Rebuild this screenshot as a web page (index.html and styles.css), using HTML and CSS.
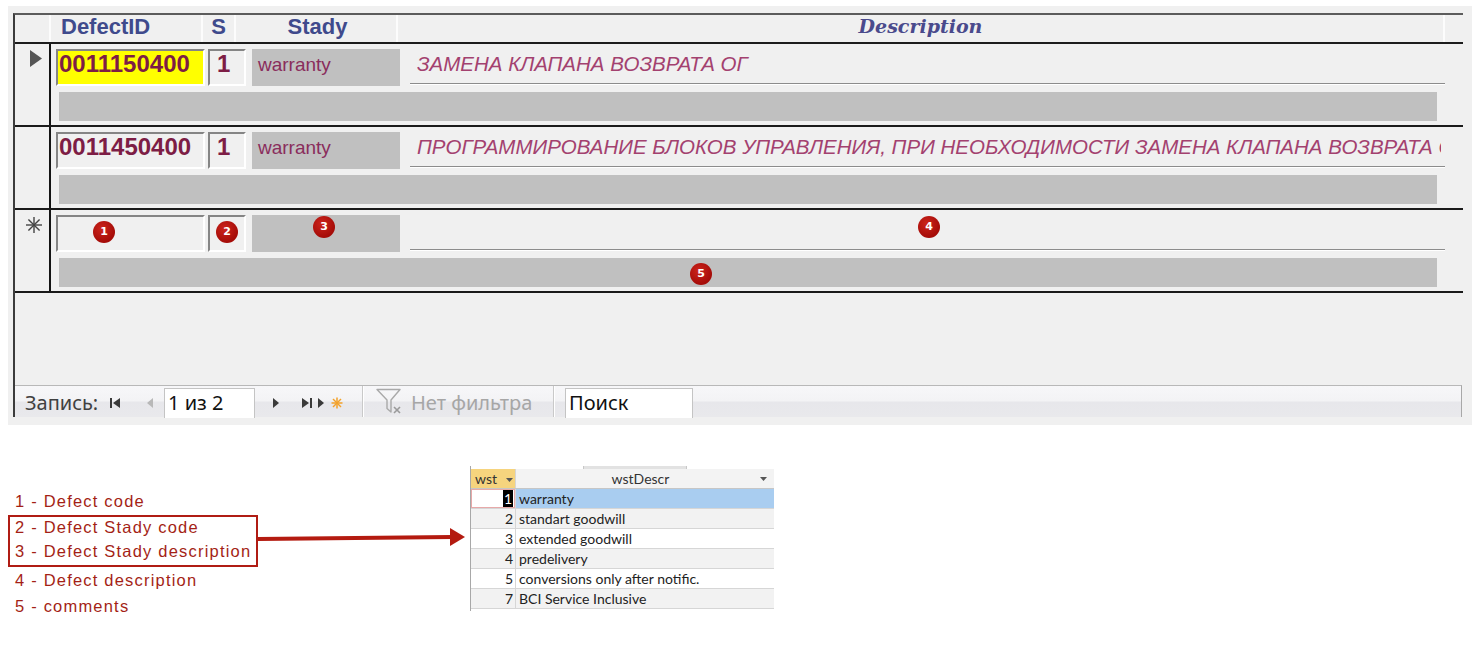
FILE: index.html
```html
<!DOCTYPE html>
<html lang="ru">
<head>
<meta charset="utf-8">
<title>Defects form</title>
<link rel="stylesheet" href="styles.css">
</head>
<body>
<div class="panel">
  <div class="form">
    <div class="hdr">
      <div class="hc hsel"></div>
      <div class="hc h-id">DefectID</div>
      <div class="hc h-s">S</div>
      <div class="hc h-st">Stady</div>
      <div class="hc h-desc">Description</div>
      <div class="hc h-end"></div>
    </div>

    <div class="rec">
      <div class="sel"><svg class="tri" width="12" height="17" viewBox="0 0 12 17"><polygon points="0,0 12,8.5 0,17" fill="#555"/></svg></div>
      <div class="rbody">
        <div class="fields">
          <div class="fld f-id active">0011150400</div>
          <div class="fld f-s">1</div>
          <div class="f-st">warranty</div>
          <div class="f-desc"><span class="dtxt">ЗАМЕНА КЛАПАНА ВОЗВРАТА ОГ</span></div>
        </div>
        <div class="cmt"></div>
      </div>
    </div>

    <div class="rec">
      <div class="sel"></div>
      <div class="rbody">
        <div class="fields">
          <div class="fld f-id">0011450400</div>
          <div class="fld f-s">1</div>
          <div class="f-st">warranty</div>
          <div class="f-desc"><span class="dtxt">ПРОГРАММИРОВАНИЕ БЛОКОВ УПРАВЛЕНИЯ, ПРИ НЕОБХОДИМОСТИ ЗАМЕНА КЛАПАНА ВОЗВРАТА ОГ</span></div>
        </div>
        <div class="cmt"></div>
      </div>
    </div>

    <div class="rec">
      <div class="sel"><svg class="star" width="16" height="16" viewBox="0 0 16 16"><g stroke="#444" stroke-width="1.4"><line x1="8" y1="0" x2="8" y2="16"/><line x1="0" y1="8" x2="16" y2="8"/><line x1="2.4" y1="2.4" x2="13.6" y2="13.6"/><line x1="13.6" y1="2.4" x2="2.4" y2="13.6"/></g></svg></div>
      <div class="rbody">
        <div class="fields">
          <div class="fld f-id"><span class="badge b1">1</span></div>
          <div class="fld f-s"><span class="badge b2">2</span></div>
          <div class="f-st"><span class="badge b3">3</span></div>
          <div class="f-desc"><span class="badge b4">4</span></div>
        </div>
        <div class="cmt"><span class="badge b5">5</span></div>
      </div>
    </div>

    <div class="empty"></div>

    <div class="nav">
      <span class="nlbl">Запись:</span>
      <svg class="ic i-first" width="10" height="10" viewBox="0 0 10 10"><rect x="0" y="0" width="2" height="10" fill="#3a3a3a"/><polygon points="10,0 3,5 10,10" fill="#3a3a3a"/></svg>
      <svg class="ic i-prev" width="6" height="10" viewBox="0 0 6 10"><polygon points="6,0 0,5 6,10" fill="#b8b8b8"/></svg>
      <span class="nbox nb1">1 из 2</span>
      <svg class="ic i-next" width="6" height="10" viewBox="0 0 6 10"><polygon points="0,0 6,5 0,10" fill="#3a3a3a"/></svg>
      <svg class="ic i-last" width="10" height="10" viewBox="0 0 10 10"><polygon points="0,0 7,5 0,10" fill="#3a3a3a"/><rect x="8" y="0" width="2" height="10" fill="#3a3a3a"/></svg>
      <svg class="ic i-new" width="26" height="12" viewBox="0 0 26 12"><polygon points="0,1 6,6 0,11" fill="#3a3a3a"/><g stroke="#f3a22a" stroke-width="1.5"><line x1="19" y1="0.5" x2="19" y2="11.5"/><line x1="13.5" y1="6" x2="24.5" y2="6"/><line x1="15" y1="2" x2="23" y2="10"/><line x1="23" y1="2" x2="15" y2="10"/></g></svg>
      <span class="nsep"></span>
      <svg class="ic i-filter" width="27" height="27" viewBox="0 0 27 27"><path d="M1 1.5 H24 L15 12 V24 L11 20.5 V12 Z" fill="none" stroke="#a9a9a9" stroke-width="1.4" stroke-linejoin="round"/><g stroke="#9a9a9a" stroke-width="1.6"><line x1="18" y1="19" x2="24" y2="25"/><line x1="24" y1="19" x2="18" y2="25"/></g></svg>
      <span class="nflt">Нет фильтра</span>
      <span class="nsep"></span>
      <span class="nbox nb2">Поиск</span>
    </div>
  </div>
</div>

<div class="lower">
  <div class="legend">
    <div class="li">1 - Defect code</div>
    <div class="lbox">
      <div class="li">2 - Defect Stady code</div>
      <div class="li">3 - Defect Stady description</div>
    </div>
    <div class="li">4 - Defect description</div>
    <div class="li">5 - comments</div>
  </div>
  <svg class="arrow" width="210" height="22" viewBox="0 0 210 22"><polygon points="0,11 194,9 194,13 0,15" fill="#b41b10"/><polygon points="192,2 207,11 192,20" fill="#b41b10"/></svg>
  <div class="tbl">
    <div class="tstrip"></div>
    <div class="trow thead">
      <div class="tc c1 hy">wst <svg class="dd" width="7" height="4" viewBox="0 0 7 4"><polygon points="0,0 7,0 3.5,4" fill="#555"/></svg></div>
      <div class="tc c2 hg"><span class="htx">wstDescr</span><svg class="dd dd2" width="7" height="4" viewBox="0 0 7 4"><polygon points="0,0 7,0 3.5,4" fill="#555"/></svg></div>
    </div>
    <div class="trow">
      <div class="tc c1 act"><span class="curs">1</span></div>
      <div class="tc c2 selb">warranty</div>
    </div>
    <div class="trow alt">
      <div class="tc c1">2</div>
      <div class="tc c2">standart goodwill</div>
    </div>
    <div class="trow">
      <div class="tc c1">3</div>
      <div class="tc c2">extended goodwill</div>
    </div>
    <div class="trow alt">
      <div class="tc c1">4</div>
      <div class="tc c2">predelivery</div>
    </div>
    <div class="trow">
      <div class="tc c1">5</div>
      <div class="tc c2">conversions only after notific.</div>
    </div>
    <div class="trow alt">
      <div class="tc c1">7</div>
      <div class="tc c2">BCI Service Inclusive</div>
    </div>
  </div>
</div>
</body>
</html>
```

FILE: styles.css
```css
* { box-sizing: border-box; }

body {
  margin: 0;
  background: #ffffff;
  font-family: "Liberation Sans", Arial, sans-serif;
}

/* ---------- Access form panel ---------- */
.panel {
  margin: 6px 0 0 8px;
  width: 1464px;
  height: 419px;
  background: #f0f0f0;
  padding: 7px 0 0 5px;
}

.form {
  width: 1450px;
  height: 404px;
  border-left: 2px solid #3c3c3c;
  border-top: 2px solid #5c5c5c;
  display: flex;
  flex-direction: column;
}

.hdr {
  display: flex;
  height: 29px;
  border-bottom: 2px solid #1c1c1c;
  background: #f0f0f0;
}

.hc {
  height: 27px;
  border-right: 2px solid #fcfcfc;
  font-weight: bold;
  font-size: 22px;
  line-height: 23px;
  color: #3f4a8c;
  white-space: nowrap;
}

.hsel { width: 36px; }
.h-id { width: 152px; padding-left: 10px; }
.h-s { width: 33px; text-align: center; }
.h-st { width: 162px; text-align: center; padding-left: 3px; }
.h-desc {
  width: 1047px;
  text-align: center;
  font-family: "DejaVu Serif", serif;
  font-style: italic;
  font-size: 19px;
  color: #4a4a8c;
}
.h-end { flex: 1; border-right: none; }

.rec {
  display: flex;
  height: 83px;
  border-bottom: 2px solid #1a1a1a;
}

.sel {
  width: 36px;
  border-right: 2px solid #141414;
}

.tri { display: block; margin: 6px 0 0 15px; }
.star { display: block; margin: 7px 0 0 11px; }

.rbody {
  flex: 1;
  padding: 5px 0 0 5px;
}

.fields {
  display: flex;
  align-items: flex-start;
  height: 37px;
}

.fld {
  position: relative;
  height: 37px;
  border: 2px solid;
  border-color: #858585 #ffffff #ffffff #858585;
  font-weight: bold;
  font-size: 24px;
  line-height: 25px;
  color: #7d1d45;
  white-space: nowrap;
}

.f-id { width: 149px; padding-left: 1px; }
.f-id.active { background: #ffff00; }
.f-s { width: 38px; margin-left: 3px; padding-left: 7px; }

.f-st {
  position: relative;
  width: 148px;
  height: 37px;
  margin-left: 6px;
  padding-left: 6px;
  background: #c0c0c0;
  font-size: 19px;
  line-height: 31px;
  color: #8a2d5c;
}

.f-desc {
  position: relative;
  width: 1035px;
  height: 35px;
  margin-left: 10px;
  padding: 0 4px 0 7px;
  border-bottom: 1px solid #8c8c8c;
  box-shadow: 0 1px 0 #ffffff;
  font-style: italic;
  font-size: 20.5px;
  line-height: 30px;
  color: #a3416f;
}

.dtxt {
  display: block;
  overflow: hidden;
  white-space: nowrap;
}

.cmt {
  position: relative;
  width: 1378px;
  height: 29px;
  margin: 6px 0 0 3px;
  background: #c0c0c0;
}

.badge {
  position: absolute;
  width: 22px;
  height: 22px;
  border-radius: 50%;
  background: radial-gradient(circle at 40% 35%, #cc241c, #a50c08 70%);
  color: #ffffff;
  font-family: "DejaVu Sans", sans-serif;
  font-weight: bold;
  font-size: 11px;
  line-height: 22px;
  text-align: center;
  font-style: normal;
}
.b1 { left: 35px; top: 4px; }
.b2 { left: 6px; top: 4px; }
.b3 { left: 61px; top: 1px; }
.b4 { left: 508px; top: 1px; }
.b5 { left: 631px; top: 5px; }

.empty { flex: 1; }

/* ---------- navigation bar ---------- */
.nav {
  display: flex;
  align-items: flex-start;
  width: 1447px;
  height: 32px;
  padding-left: 10px;
  border-top: 1px solid #b8b8b8;
  border-right: 1px solid #a8a8a8;
  background: linear-gradient(#f7f7f9 0%, #f3f3f5 48%, #e7e7eb 52%, #e9e9ec 100%);
  font-family: "Noto Sans", "Open Sans", sans-serif;
  font-size: 20px;
  line-height: 33px;
}

.nlbl { width: 85px; color: #404040; white-space: nowrap; }
.ic { display: block; flex: none; margin-top: 12px; }
.i-first { margin-left: 0; }
.i-prev { margin-left: 27px; }
.i-next { margin-left: 18px; }
.i-last { margin-left: 23px; }
.i-new { margin-left: 6px; margin-top: 11px; }
.i-filter { margin-left: 12px; margin-top: 2px; }

.nbox {
  height: 30px;
  margin-top: 2px;
  padding-left: 3px;
  background: #ffffff;
  border: 1px solid #c4c4c4;
  border-bottom: none;
  line-height: 27px;
  color: #111111;
  white-space: nowrap;
}
.nb1 { width: 91px; margin-left: 11px; }
.nb2 { width: 128px; margin-left: 10px; }

.nsep {
  width: 2px;
  height: 31px;
  border-left: 1px solid #c9c9c9;
  border-right: 1px solid #ffffff;
}
.i-new + .nsep { margin-left: 18px; }

.nflt {
  width: 142px;
  margin-left: 8px;
  color: #a6a6a6;
  white-space: nowrap;
}

/* ---------- legend + lookup table ---------- */
.lower {
  display: flex;
  align-items: flex-start;
  margin: 41px 0 0 8px;
}

.legend {
  width: 250px;
  margin-top: 22px;
}

.li {
  padding-left: 7px;
  font-size: 16.5px;
  letter-spacing: 1.2px;
  line-height: 26px;
  color: #a41f16;
  white-space: nowrap;
}

.lbox {
  margin-top: 1px;
  border: 2px solid #b01c14;
}
.lbox .li { padding-left: 5px; line-height: 24px; }
.lbox .li:first-child { line-height: 21px; }
.lbox .li:last-child { line-height: 27px; }

.arrow { display: block; flex: none; margin-top: 60px; }

.tbl {
  width: 304px;
  margin-left: 2px;
  border-left: 1px solid #a8a8a8;
  padding-bottom: 2px;
  font-family: Lato, "Open Sans", sans-serif;
  font-size: 14px;
  color: #222222;
}

.tstrip {
  width: 104px;
  height: 3px;
  margin-left: 112px;
  background: #e2e2e2;
  border-left: 1px solid #c8c8c8;
  border-right: 1px solid #c8c8c8;
}

.trow {
  display: flex;
  height: 20px;
  border-bottom: 1px solid #d6d6d6;
  background: #ffffff;
}
.trow.alt { background: #f2f2f2; }
.thead { border-bottom: 1px solid #c6c6c6; }

.tc { line-height: 20px; white-space: nowrap; }
.c1 {
  width: 45px;
  padding-right: 2px;
  text-align: right;
  border-right: 1px solid #d6d6d6;
}
.c2 { flex: 1; padding-left: 3px; }

.hy {
  background: #f6d47e;
  text-align: left;
  padding-left: 4px;
  color: #333333;
}
.hg {
  position: relative;
  background: #f3f3f3;
  text-align: center;
  color: #333333;
}
.htx { margin-left: -12px; }
.dd { display: inline-block; margin-left: 5px; vertical-align: middle; }
.dd2 { position: absolute; right: 7px; top: 8px; }

.act {
  background: #ffffff;
  box-shadow: inset 0 0 0 1px #e7a9a9;
}
.curs { background: #000000; color: #ffffff; padding: 0 1px; }
.selb { background: #a9cdf0; }
```
